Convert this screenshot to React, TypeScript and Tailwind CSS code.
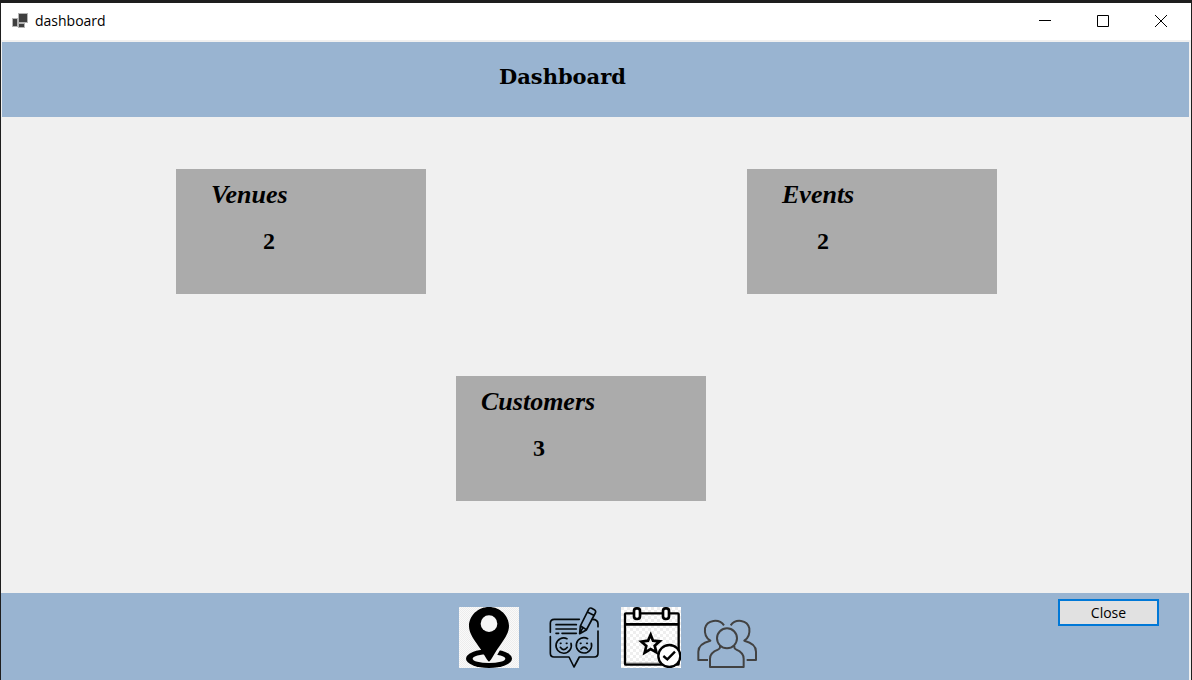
import type { ReactNode } from "react";

function AppIcon() {
  return (
    <svg width="16" height="16" viewBox="0 0 16 16" aria-hidden="true" shapeRendering="crispEdges">
      <path d="M0 5h6V0h10v10h-3v5H6v-1H0z" fill="#b4b4b4" />
      <path d="M1 6h4v7H1zM7 1h8v8H7zM7 11h5v3H7z" fill="#3f3f3f" />
    </svg>
  );
}

function PinIcon() {
  return (
    <svg width="60" height="61" viewBox="0 0 180 183" aria-hidden="true">
      <defs>
        <pattern id="pin-checks" width="6" height="6" patternUnits="userSpaceOnUse">
          <path d="M0 0h6v6H0z" fill="#fafafa" />
          <path d="M0 0h3v3H0zM3 3h3v3H3z" fill="#ededed" />
        </pattern>
      </defs>
      <path d="M0 0h180v183H0z" fill="url(#pin-checks)" />
      <ellipse cx="90" cy="155" rx="69" ry="28" />
      <ellipse cx="90" cy="155" rx="49" ry="13" fill="#f5f5f5" />
      <path d="M72 116L96 158L115 143L126 124L128 114z" fill="#f5f5f5" />
      <path d="M90 0C57 0 30 26 30 57C30 76 41 92 52 108C62 122 70 134 77 146C82 155 86 161 90 164C94 161 98 155 103 146C110 134 118 122 128 108C139 92 150 76 150 57C150 26 123 0 90 0z" />
      <circle cx="90" cy="50" r="25" fill="#f5f5f5" />
    </svg>
  );
}

function FeedbackIcon() {
  return (
    <svg
      width="50"
      height="61"
      viewBox="0 0 150 183"
      fill="none"
      stroke="#050a0c"
      strokeWidth="5"
      strokeLinecap="round"
      strokeLinejoin="round"
      aria-hidden="true"
    >
      <path d="M4 76V49Q4 37 16 37H91M130 37Q147 37 147 51V59M147 72V139Q147 150 136 150H91L75 180L60 150H15Q4 150 4 139V89" />
      <path d="M21 53H82M21 66H82M39 79H82M21 79H29" />
      <path d="M92 80L94 57L119 7Q122 1 128 4L136 8Q142 12 139 18L112 69zM115 15L134 25M95 57L112 68M92 80L100 65" />
      <path d="M54 95A23 23 0 1 0 66 109M116 95A23 23 0 1 0 127 109" />
      <path d="M34 109H36M52 109H54M94 109H96M113 109H115" />
      <path d="M34 121Q44 135 55 121M96 126Q105 115 115 126" />
    </svg>
  );
}

function CalendarIcon() {
  return (
    <svg width="60" height="61" viewBox="0 0 180 183" fill="none" stroke="#000" aria-hidden="true">
      <defs>
        <pattern id="calendar-checks" width="18" height="18" patternUnits="userSpaceOnUse">
          <path d="M0 0h18v18H0z" fill="#fff" stroke="none" />
          <path d="M0 0h9v9H0zM9 9h9v9H9z" fill="#eeeeee" stroke="none" />
        </pattern>
      </defs>
      <path d="M0 0h180v183H0z" fill="url(#calendar-checks)" stroke="none" />
      <path d="M15 168H120" stroke="#9a9a9a" strokeWidth="3" />
      <rect x="12" y="19" width="161" height="154" rx="3" strokeWidth="7" />
      <path d="M12 52H173" strokeWidth="8" />
      <rect x="39" y="4" width="18" height="32" rx="8" fill="#fff" strokeWidth="8" />
      <rect x="126" y="4" width="18" height="32" rx="8" fill="#fff" strokeWidth="8" />
      <path d="M89 83L96 101L116 103L101 116L106 136L89 126L71 137L76 117L61 104L81 101z" strokeWidth="8" />
      <circle cx="145" cy="147" r="33" fill="#fff" strokeWidth="7" />
      <path d="M127 147L139 157L162 134" strokeWidth="7" />
    </svg>
  );
}

function PeopleIcon() {
  return (
    <svg
      width="60"
      height="61"
      viewBox="0 0 180 183"
      fill="none"
      stroke="#424242"
      strokeWidth="6"
      strokeLinejoin="round"
      aria-hidden="true"
    >
      <circle cx="90" cy="94" r="30" />
      <path d="M69 116V121Q69 126 63 128Q39 137 39 155V180H140V155Q140 137 118 128Q112 126 112 121V116" />
      <path d="M81 55C66 34 30 38 24 64C22 80 27 93 40 101C12 108 4 120 4 134V159H33" />
      <path d="M101 55C116 34 151 38 157 64C159 80 154 93 142 101C170 108 177 120 177 134V159H149" />
    </svg>
  );
}

function CaptionButton({ label, children }: { label: string; children: ReactNode }) {
  return (
    <button type="button" aria-label={label} className="flex h-9 w-[58px] items-center justify-center">
      <svg width="12" height="12" viewBox="0 0 12 12" fill="none" stroke="#000" aria-hidden="true">
        {children}
      </svg>
    </button>
  );
}

type StatCardProps = { title: string; value: number; titlePad: string; valuePad: string };

function StatCard({ title, value, titlePad, valuePad }: StatCardProps) {
  return (
    <section className="h-[125px] w-[250px] bg-[#ababab] pt-3 font-['Liberation_Serif',serif] font-bold text-black">
      <h2 className={`text-[26px] leading-7 italic ${titlePad}`}>{title}</h2>
      <p className={`pt-[18px] text-2xl leading-7 ${valuePad}`}>{value}</p>
    </section>
  );
}

export default function App() {
  return (
    <div className="flex min-h-screen flex-col border-x border-t-3 border-[#1e1e1e] bg-[#f0f0f0] font-['Open_Sans',sans-serif] text-sm text-black">
      <div className="flex h-[37px] items-start justify-between bg-white pr-px pl-[11px]">
        <div className="flex h-9 items-center gap-[7px]">
          <AppIcon />
          <span>dashboard</span>
        </div>
        <div className="flex">
          <CaptionButton label="Minimize">
            <path d="M0 5.5H12" />
          </CaptionButton>
          <CaptionButton label="Maximize">
            <path d="M.5 .5H11.5V11.5H.5z" />
          </CaptionButton>
          <CaptionButton label="Close window">
            <path d="M0 0L12 12M12 0L0 12" />
          </CaptionButton>
        </div>
      </div>

      <header className="mt-0.5 mr-0.5 ml-px flex h-[75px] justify-center bg-[#99b4d1] pt-[21px] pr-[66px]">
        <h1 className="font-['DejaVu_Serif',serif] text-[21px] leading-7 font-bold">Dashboard</h1>
      </header>

      <main className="flex grow flex-col gap-[82px] pt-[52px] pb-[92px]">
        <div className="flex justify-between pr-[194px] pl-[175px]">
          <StatCard title="Venues" value={2} titlePad="pl-[35px]" valuePad="pl-[87px]" />
          <StatCard title="Events" value={2} titlePad="pl-[35px]" valuePad="pl-[70px]" />
        </div>
        <div className="flex justify-center pr-[30px]">
          <StatCard title="Customers" value={3} titlePad="pl-[25px]" valuePad="pl-[77px]" />
        </div>
      </main>

      <footer className="mr-0.5 grid h-[87px] grid-cols-[1fr_auto_1fr] items-start bg-[#99b4d1] pr-[30px] pl-[56px]">
        <nav aria-label="Sections" className="col-start-2 flex pt-[14px]">
          <button type="button" aria-label="Venues">
            <PinIcon />
          </button>
          <button type="button" aria-label="Feedback" className="mr-[22px] ml-[30px]">
            <FeedbackIcon />
          </button>
          <button type="button" aria-label="Events" className="mr-4">
            <CalendarIcon />
          </button>
          <button type="button" aria-label="Customers">
            <PeopleIcon />
          </button>
        </nav>
        <button
          type="button"
          className="mt-1.5 h-[27px] w-[101px] justify-self-end border-2 border-[#0078d7] bg-[#e1e1e1] leading-5"
        >
          Close
        </button>
      </footer>
    </div>
  );
}
